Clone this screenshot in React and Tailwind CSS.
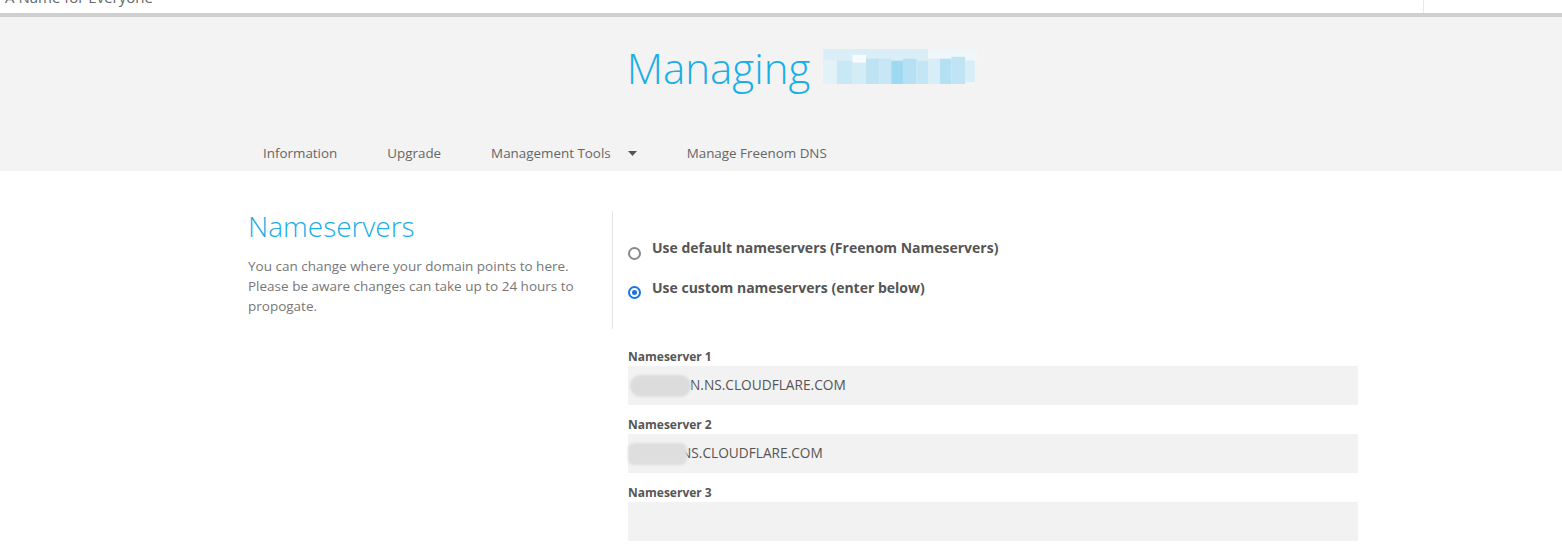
import React from "react";

function BlurredDomain() {
  const cells = [
    [0, 0, 108, 12, "#d9eef7"],
    [108, 0, 50, 12, "#f0f7fa"],
    [30, 6, 14, 10, "#f7fbfd"],
    [0, 12, 14, 24, "#e3f1f8"],
    [14, 12, 16, 24, "#c9e8f5"],
    [30, 14, 14, 22, "#d3ecf6"],
    [44, 10, 14, 26, "#bfe3f3"],
    [58, 10, 12, 26, "#c7e7f5"],
    [70, 12, 12, 24, "#9ed8f1"],
    [82, 10, 14, 26, "#b6e0f3"],
    [96, 12, 12, 24, "#c3e5f4"],
    [108, 10, 12, 26, "#d7eef8"],
    [120, 10, 12, 26, "#b5e0f3"],
    [132, 8, 14, 28, "#c0e4f4"],
    [146, 12, 10, 22, "#d6eef8"],
  ];
  return (
    <svg width="158" height="35" viewBox="0 0 158 36" className="inline-block align-baseline">
      {cells.map((c, i) => (
        <rect key={i} x={c[0]} y={c[1]} width={c[2]} height={c[3]} fill={c[4]} />
      ))}
    </svg>
  );
}

function Radio({ checked }) {
  return checked ? (
    <span className="mt-[8px] mr-[11px] w-[13px] h-[13px] rounded-full border-2 border-[#1a73e8] flex items-center justify-center shrink-0">
      <span className="w-[5px] h-[5px] rounded-full bg-[#1a73e8]" />
    </span>
  ) : (
    <span className="mt-[9px] mr-[11px] w-[13px] h-[13px] rounded-full border-2 border-[#8a8a8a] shrink-0" />
  );
}

function Field({ label, children }) {
  return (
    <div className="mb-[11px]">
      <div className="text-[12px] font-bold leading-[17px] text-[#555] mb-[1px]">{label}</div>
      <div className="relative h-[39px] bg-[#f2f2f2] flex items-center text-[13.7px] text-[#555]">
        {children}
      </div>
    </div>
  );
}

export default function App() {
  return (
    <div className="min-h-[553px] bg-white font-['Open_Sans',sans-serif] overflow-hidden">
      <div className="flex h-[17px] border-b-4 border-[#cfcfcf]">
        <div className="w-[1424px] border-r border-[#e8e8e8] overflow-hidden">
          <div className="mt-[-13px] ml-[5px] text-[15px] leading-[20px] text-[#666]">A Name for Everyone</div>
        </div>
        <div className="flex-1" />
      </div>

      <div className="bg-[#f3f3f3] pt-[28px] pb-[8px]">
        <div className="ml-[233px] w-[1140px] px-[15px]">
          <h1 className="text-center text-[42px] font-light leading-[1.1] text-[#1aaee6]">
            Managing <BlurredDomain />
          </h1>
          <nav className="mt-[52px] ml-[15px] flex items-center gap-[50px] text-[13.4px] leading-[20px] text-[#666]">
            <span>Information</span>
            <span>Upgrade</span>
            <span className="flex items-center">
              Management Tools
              <svg width="9" height="5" viewBox="0 0 9 5" className="ml-[17px]">
                <path d="M0 0 L9 0 L4.5 5 Z" fill="#555" />
              </svg>
            </span>
            <span>Manage Freenom DNS</span>
          </nav>
        </div>
      </div>

      <div className="ml-[233px] w-[1140px] mt-[40px]">
        <div className="flex">
          <div className="w-[380px] px-[15px] pb-[13px] border-r border-[#e5e5e5]">
            <h2 className="text-[28px] font-light leading-[1.1] text-[#1aaee6]">Nameservers</h2>
            <p className="mt-[14px] text-[13.5px] leading-[20px] text-[#777]">
              You can change where your domain points to here. Please be aware changes can take up to 24 hours to propogate.
            </p>
          </div>
          <div className="flex-1 pl-[15px] pt-[27px] flex flex-col gap-[20px]">
            <label className="flex h-[20px] text-[14px] leading-[20px] font-bold text-[#555]">
              <Radio />
              Use default nameservers (Freenom Nameservers)
            </label>
            <label className="flex h-[20px] text-[14px] leading-[20px] font-bold text-[#555]">
              <Radio checked />
              Use custom nameservers (enter below)
            </label>
          </div>
        </div>

        <div className="ml-[380px] px-[15px] mt-[19px]">
          <Field label="Nameserver 1">
            <span className="pl-[62px]">N.NS.CLOUDFLARE.COM</span>
            <span className="absolute left-[2px] top-[9px] w-[61px] h-[22px] rounded-full bg-[#dcdcdc] blur-[1px]" />
          </Field>
          <Field label="Nameserver 2">
            <span className="pl-[53px]">NS.CLOUDFLARE.COM</span>
            <span className="absolute left-0 top-[9px] w-[59px] h-[22px] rounded-[6px] bg-[#dedede] blur-[1px]" />
          </Field>
          <Field label="Nameserver 3" />
        </div>
      </div>
    </div>
  );
}
